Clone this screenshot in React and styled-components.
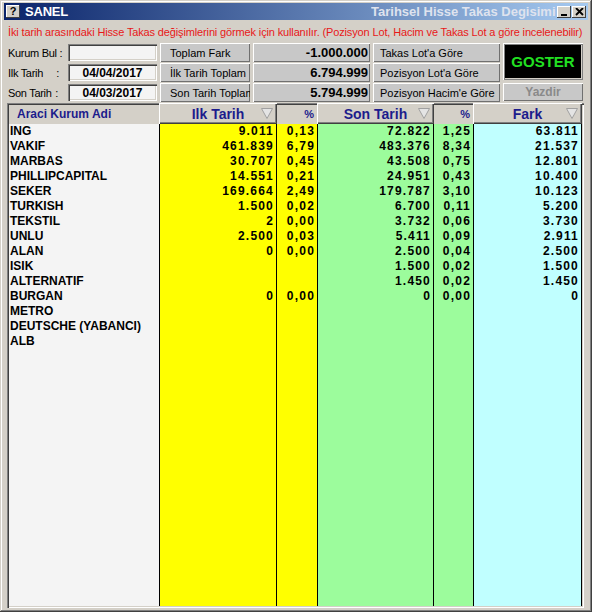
import React from "react";
import styled, { createGlobalStyle } from "styled-components";

const GlobalStyle = createGlobalStyle`
  body {
    margin: 0;
    background: #d4d0c8;
  }
`;

const rows = [
  ["ING", "9.011", "0,13", "72.822", "1,25", "63.811"],
  ["VAKIF", "461.839", "6,79", "483.376", "8,34", "21.537"],
  ["MARBAS", "30.707", "0,45", "43.508", "0,75", "12.801"],
  ["PHILLIPCAPITAL", "14.551", "0,21", "24.951", "0,43", "10.400"],
  ["SEKER", "169.664", "2,49", "179.787", "3,10", "10.123"],
  ["TURKISH", "1.500", "0,02", "6.700", "0,11", "5.200"],
  ["TEKSTIL", "2", "0,00", "3.732", "0,06", "3.730"],
  ["UNLU", "2.500", "0,03", "5.411", "0,09", "2.911"],
  ["ALAN", "0", "0,00", "2.500", "0,04", "2.500"],
  ["ISIK", "", "", "1.500", "0,02", "1.500"],
  ["ALTERNATIF", "", "", "1.450", "0,02", "1.450"],
  ["BURGAN", "0", "0,00", "0", "0,00", "0"],
  ["METRO", "", "", "", "", ""],
  ["DEUTSCHE (YABANCI)", "", "", "", "", ""],
  ["ALB", "", "", "", "", ""],
];

const columns = [
  { bg: "#f4f4f4", name: true },
  { bg: "#ffff00" },
  { bg: "#ffff00" },
  { bg: "#9cfc9c" },
  { bg: "#9cfc9c" },
  { bg: "#c0ffff" },
];

const COLS = "151px 117px 41px 116px 40px 108px";

const Window = styled.div`
  width: 592px;
  height: 612px;
  box-sizing: border-box;
  background: #d4d0c8;
  padding: 3px 4px 4px 4px;
  box-shadow: inset -1px -1px 0 #404040, inset 1px 1px 0 #d4d0c8,
    inset -2px -2px 0 #808080, inset 2px 2px 0 #ffffff;
  display: flex;
  flex-direction: column;
  font-family: "Liberation Sans", Arial, sans-serif;
  overflow: hidden;
`;

const TitleBar = styled.div`
  height: 17px;
  flex-shrink: 0;
  display: flex;
  align-items: center;
  padding: 0 2px;
  background: linear-gradient(to right, #0a246a, #a6caf0);
`;

const HelpIcon = styled.span`
  width: 14px;
  height: 13px;
  box-sizing: border-box;
  background: #d4d0c8;
  box-shadow: inset -1px -1px 0 #404040, inset 1px 1px 0 #ffffff;
  color: #000;
  font-weight: 700;
  font-size: 11px;
  line-height: 13px;
  text-align: center;
`;

const AppName = styled.span`
  margin-left: 5px;
  color: #fff;
  font-weight: 700;
  font-size: 13px;
  letter-spacing: -0.2px;
`;

const Caption = styled.span`
  margin-left: auto;
  min-width: 0;
  width: 185px;
  overflow: hidden;
  white-space: nowrap;
  color: #dfe3ee;
  font-weight: 700;
  font-size: 13px;
`;

const TitleButton = styled.span`
  width: 14px;
  height: 12px;
  box-sizing: border-box;
  margin-left: 1px;
  background: #d4d0c8;
  box-shadow: inset -1px -1px 0 #404040, inset 1px 1px 0 #ffffff;
  display: flex;
  align-items: center;
  justify-content: center;
`;

const Info = styled.div`
  height: 23px;
  flex-shrink: 0;
  display: flex;
  align-items: center;
  padding-left: 4px;
  color: #e81818;
  font-size: 11px;
  letter-spacing: -0.14px;
  white-space: nowrap;
`;

const Controls = styled.div`
  display: grid;
  grid-template-columns: 59px 89px 90px 117px 127px 80px;
  grid-template-rows: 19px 19px 19px;
  column-gap: 3px;
  row-gap: 1px;
  padding-left: 2px;
  flex-shrink: 0;
`;

const Label = styled.div`
  display: flex;
  align-items: center;
  padding-left: 2px;
  font-size: 11px;
  letter-spacing: -0.3px;
  color: #000;
  white-space: nowrap;
`;

const Colon = styled.span`
  margin-left: auto;
  padding-right: ${(p) => p.$pad || 7}px;
`;

const Field = styled.div`
  margin: 1px 0;
  background: #f4f4f4;
  box-shadow: inset 1px 1px 0 #808080, inset 2px 2px 0 #404040,
    inset -1px -1px 0 #ffffff, inset -2px -2px 0 #d4d0c8;
  font-size: 12px;
  font-weight: 700;
  display: flex;
  align-items: center;
  justify-content: center;
`;

const Raised = styled.div`
  background: #c8c8c8;
  box-shadow: inset 1px 1px 0 #ffffff, inset -1px -1px 0 #707070;
  display: flex;
  align-items: center;
  overflow: hidden;
  white-space: nowrap;
`;

const CaptionButton = styled(Raised)`
  font-size: 11px;
  padding-left: ${(p) => p.$indent || 10}px;
`;

const Total = styled(Raised)`
  justify-content: flex-end;
  padding-right: 2px;
  font-size: 13px;
  font-weight: 700;
`;

const Goster = styled.div`
  grid-row: 1 / span 2;
  grid-column: 6;
  margin-bottom: 2px;
  background: #000;
  box-shadow: inset 1px 1px 0 #ffffff, inset -1px -1px 0 #808080,
    inset 2px 2px 0 #808080, inset -2px -2px 0 #d4d0c8;
  color: #22e022;
  font-size: 15px;
  font-weight: 700;
  display: flex;
  align-items: center;
  justify-content: center;
`;

const Yazdir = styled(Raised)`
  grid-column: 6;
  margin-bottom: 1px;
  justify-content: center;
  color: #8a8a8a;
  font-size: 12px;
  font-weight: 700;
`;

const Table = styled.div`
  flex: 1;
  margin: 1px 4px 0 3px;
  display: flex;
  flex-direction: column;
  box-shadow: inset 1px 1px 0 #808080, inset 2px 2px 0 #404040,
    inset -1px -1px 0 #ffffff, inset -2px -2px 0 #d4d0c8;
  padding: 0 2px 2px 2px;
  min-height: 0;
`;

const HeaderRow = styled.div`
  display: grid;
  grid-template-columns: ${COLS};
  height: 21px;
  flex-shrink: 0;
`;

const NameHead = styled.div`
  display: flex;
  align-items: center;
  padding-left: 8px;
  color: #1c1c8c;
  font-size: 12px;
  font-weight: 700;
`;

const ColHead = styled.div`
  position: relative;
  background: #d4d0c8;
  box-shadow: inset 1px 1px 0 #ffffff, inset -1px -1px 0 #404040,
    inset -2px -2px 0 #808080;
  margin-left: -1px;
  display: flex;
  align-items: center;
  justify-content: center;
  color: #1c1c8c;
  font-size: 14px;
  font-weight: 700;
`;

const SortMark = styled.svg`
  position: absolute;
  right: 4px;
  top: 5px;
`;

const PctHead = styled.div`
  display: flex;
  align-items: center;
  justify-content: flex-end;
  padding-right: 4px;
  color: #1c1c8c;
  font-size: 11px;
  font-weight: 700;
`;

const Body = styled.div`
  flex: 1;
  display: grid;
  grid-template-columns: ${COLS};
  min-height: 0;
`;

const Column = styled.div`
  background: ${(p) => p.$bg};
  border-right: 1px solid #000;
  box-sizing: border-box;
  overflow: hidden;
`;

const Cell = styled.div`
  height: 15px;
  line-height: 15px;
  font-size: 12px;
  font-weight: 700;
  color: #000;
  white-space: nowrap;
  text-align: ${(p) => (p.$name ? "left" : "right")};
  padding: ${(p) => (p.$name ? "0 0 0 1px" : "0 2px 0 0")};
  letter-spacing: ${(p) => (p.$name ? "0" : "1.2px")};
`;

const Sort = () => (
  <SortMark width="12" height="11" viewBox="0 0 12 11">
    <polygon points="0.5,0.5 11.5,0.5 6,10.5" fill="#e4e4e4" stroke="#a0a0a0" />
  </SortMark>
);

export default function App() {
  return (
    <>
      <GlobalStyle />
      <Window>
        <TitleBar>
          <HelpIcon>?</HelpIcon>
          <AppName>SANEL</AppName>
          <Caption>Tarihsel Hisse Takas Degisimi</Caption>
          <TitleButton>
            <svg width="8" height="8" viewBox="0 0 8 8">
              <rect x="1" y="6" width="6" height="2" fill="#000" />
            </svg>
          </TitleButton>
          <TitleButton>
            <svg width="9" height="8" viewBox="0 0 9 8">
              <path d="M1 0 L8 7 M8 0 L1 7" stroke="#000" strokeWidth="1.8" />
            </svg>
          </TitleButton>
        </TitleBar>

        <Info>
          İki tarih arasındaki Hisse Takas değişimlerini görmek için kullanılır. (Pozisyon Lot, Hacim ve Takas Lot a göre incelenebilir)
        </Info>

        <Controls>
          <Label>Kurum Bul :</Label>
          <Field />
          <CaptionButton>Toplam Fark</CaptionButton>
          <Total>-1.000.000</Total>
          <CaptionButton $indent={7}>Takas Lot'a Göre</CaptionButton>
          <Goster>GOSTER</Goster>

          <Label>
            Ilk Tarih<Colon $pad={6}>:</Colon>
          </Label>
          <Field>04/04/2017</Field>
          <CaptionButton>İlk Tarih Toplam</CaptionButton>
          <Total>6.794.999</Total>
          <CaptionButton $indent={7}>Pozisyon Lot'a Göre</CaptionButton>

          <Label>
            Son Tarih<Colon $pad={7}>:</Colon>
          </Label>
          <Field>04/03/2017</Field>
          <CaptionButton>Son Tarih Toplam</CaptionButton>
          <Total>5.794.999</Total>
          <CaptionButton $indent={7}>Pozisyon Hacim'e Göre</CaptionButton>
          <Yazdir>Yazdir</Yazdir>
        </Controls>

        <Table>
          <HeaderRow>
            <NameHead>Araci Kurum Adi</NameHead>
            <ColHead>
              Ilk Tarih
              <Sort />
            </ColHead>
            <PctHead>%</PctHead>
            <ColHead>
              Son Tarih
              <Sort />
            </ColHead>
            <PctHead>%</PctHead>
            <ColHead>
              Fark
              <Sort />
            </ColHead>
          </HeaderRow>
          <Body>
            {columns.map((col, ci) => (
              <Column key={ci} $bg={col.bg}>
                {rows.map((r, ri) => (
                  <Cell key={ri} $name={col.name}>
                    {r[ci]}
                  </Cell>
                ))}
              </Column>
            ))}
          </Body>
        </Table>
      </Window>
    </>
  );
}
